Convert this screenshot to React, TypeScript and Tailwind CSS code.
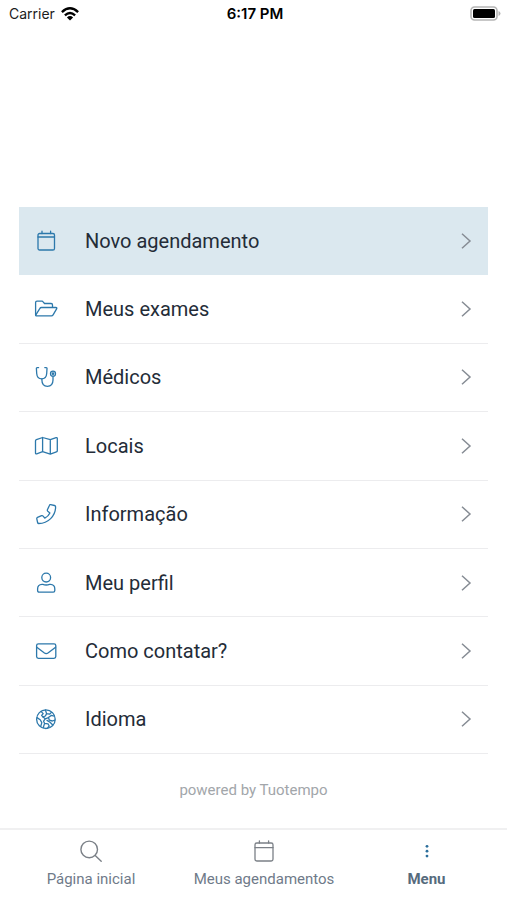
import type { ReactNode } from 'react';

const icons: Record<string, ReactNode> = {
    calendar: (
        <>
            <rect x="4" y="4.5" width="16.5" height="16.5" rx="1.6" />
            <path d="M4 8h16.5M8 2.2v2.3M16.6 2.2v2.3" />
        </>
    ),
    folder: (
        <>
            <path d="M1.6 18V5.6q0-1.4 1.4-1.4h5q.7 0 1.1.6l1.4 1.7h6.6q1.4 0 1.4 1.4v2.5" />
            <path d="M1.7 18.2 5.9 11.4q.5-.9 1.5-.9h14.4q1.6 0 .8 1.3l-3.5 6q-.6 1-1.7 1H2.6q-1 0-.9-.6z" />
        </>
    ),
    stethoscope: (
        <>
            <path d="M4.6 2.6H3.2q-.9 0-.8.9l.3 5q.4 5.3 5 5.3t5-5.3l.3-5q.1-.9-.8-.9h-1.4" />
            <path d="M7.9 13.9v1.2q0 6.2 5.5 6.2t5.6-6.2v-3.8" />
            <circle cx="19" cy="8.7" r="2.5" />
            <circle cx="19" cy="8.7" r=".7" />
        </>
    ),
    map: (
        <path d="M8.6 3.5 2.4 5.6q-.9.3-.9 1.2v12.1q0 1.3 1.2.9l5.9-2.1 7.7 2.4 6.1-2.2q.9-.3.9-1.2V4.6q0-1.3-1.2-.9l-5.8 2zM8.6 3.5v14.2M16.3 5.7v14.4" />
    ),
    phone: (
        <path d="m16.6 2.7 3.9.8q1.1.3 1.1 1.3C21.6 14 14 21.5 4.8 21.5q-1 0-1.2-1l-.8-3.7q-.2-1 .7-1.4l4.1-1.7q.9-.3 1.5.4l1.7 2.1q3.4-1.7 5.1-5.2l-2.1-1.7q-.7-.6-.4-1.5l2-4.4q.3-.9 1.2-.7z" />
    ),
    user: (
        <>
            <circle cx="12.2" cy="6.6" r="4.4" />
            <path d="M8 13.3h.8q3.4 1.4 6.8 0h.8q4.4.1 4.4 4.7v1.5q0 1.6-1.6 1.6h-14q-1.6 0-1.6-1.6V18q0-4.6 4.4-4.7z" />
        </>
    ),
    mail: (
        <>
            <rect x="2.6" y="4.8" width="19.2" height="14.6" rx="1.8" />
            <path d="m2.8 8.2 7.3 5.6q2.1 1.5 4.2 0l7.3-5.6" />
        </>
    ),
    globe: (
        <>
            <circle cx="11.9" cy="12.2" r="9.3" />
            <path d="M7 4.4 9.2 6.6 7.6 8.4 8.8 9.8 11.4 9l1.2-2.4L11.4 3M12.6 6.6l3 .6 1.8-1.8M3 10.6l3.2 2.2 1.6 2.8-1 3.6" />
            <path d="m8.8 9.8 2.4 2 3.2-1.2 2.8-2.2 3 .8M11.2 11.8l-1.6 2.4 1 2.2 3.4.4 1.2 2.2-1.6 2.2M14.4 10.6l1 2.6 3 .8 2.4-.8M13 13.4l3 1.8 2.8 2.8M10.6 16.4l-1.4 4.4" />
        </>
    ),
};

function Icon({ name, className }: { name: string; className?: string }) {
    return (
        <svg
            viewBox="0 0 24 24"
            className={`size-6 shrink-0 ${className ?? ''}`}
            fill="none"
            stroke="currentColor"
            strokeWidth="1.3"
            strokeLinecap="round"
            strokeLinejoin="round"
            aria-hidden="true"
        >
            {icons[name]}
        </svg>
    );
}

const menuItems = [
    { icon: 'calendar', label: 'Novo agendamento', active: true },
    { icon: 'folder', label: 'Meus exames' },
    { icon: 'stethoscope', label: 'Médicos' },
    { icon: 'map', label: 'Locais' },
    { icon: 'phone', label: 'Informação' },
    { icon: 'user', label: 'Meu perfil' },
    { icon: 'mail', label: 'Como contatar?' },
    { icon: 'globe', label: 'Idioma' },
];

function StatusBar() {
    return (
        <header className="grid h-7 grid-cols-3 items-center pr-[6px] pl-[9px] font-['Inter',sans-serif] text-sm text-[#1c1c1c]">
            <div className="flex items-center gap-[6px]">
                <span>Carrier</span>
                <svg viewBox="0 0 18 14" className="h-[14px] w-[18px]" fill="none" stroke="#000" strokeWidth="2.4" aria-hidden="true">
                    <path d="M.9 5.1Q9-2.4 17.1 5.1M3.9 8.3q5.1-4.6 10.2 0" />
                    <path d="M5.9 10.4q3.1-2.6 6.2 0L9 13.6z" fill="#000" stroke="none" />
                </svg>
            </div>
            <span className="text-center text-[15px] font-semibold text-black">6:17 PM</span>
            <svg viewBox="0 0 31 16" className="h-4 w-[31px] justify-self-end" aria-hidden="true">
                <rect x="1" y="1" width="26" height="13" rx="3.5" fill="#fff" stroke="#b5b5b5" strokeWidth="1.6" />
                <rect x="3" y="3" width="22" height="9" rx="1.5" fill="#000" />
                <path d="M28.5 5q2 .8 2 2.5t-2 2.5z" fill="#b5b5b5" />
            </svg>
        </header>
    );
}

export default function App() {
    return (
        <div className="flex min-h-screen flex-col bg-white font-['Roboto',sans-serif]">
            <StatusBar />

            <main className="flex flex-1 flex-col px-[19px] pt-[179px]">
                <ul className="grid flex-1 auto-rows-fr">
                    {menuItems.map((item) => (
                        <li key={item.label} className={item.active ? 'bg-[#dbe8ef]' : 'border-b border-[#ececee]'}>
                            <button type="button" className="flex h-full w-full items-center gap-[27px] py-4 pr-4 pl-[15px] text-left">
                                <Icon name={item.icon} className="text-[#2c78ab]" />
                                <span className="flex-1 text-xl text-[#242c38]">{item.label}</span>
                                <svg viewBox="0 0 12 18" className="h-[18px] w-3" fill="none" stroke="#868c94" strokeWidth="1.5" aria-hidden="true">
                                    <path d="m2 1.8 8 7.2-8 7.2" />
                                </svg>
                            </button>
                        </li>
                    ))}
                </ul>
                <p className="pt-[25px] pb-[27px] text-center text-[15px] leading-[22px] text-[#a2a6aa]">powered by Tuotempo</p>
            </main>

            {/* Bottom tabs */}
            <nav className="grid h-[72px] grid-cols-[182fr_164fr_161fr] border-t-2 border-[#f0f0f1] text-[15px] leading-5 text-[#6f7a89]">
                <button type="button" className="flex flex-col items-center gap-[6px] pt-[9px]">
                    <svg viewBox="0 0 24 24" className="size-6" fill="none" stroke="#7b8087" strokeWidth="1.4" strokeLinecap="round" aria-hidden="true">
                        <circle cx="10.2" cy="10.4" r="8.3" />
                        <path d="m16.2 16.4 6 5.8" />
                    </svg>
                    Página inicial
                </button>
                <button type="button" className="flex flex-col items-center gap-[6px] pt-[9px]">
                    <svg viewBox="0 0 24 24" className="size-6" fill="none" stroke="#7b8087" strokeWidth="1.3" strokeLinecap="round" aria-hidden="true">
                        <rect x="3" y="4" width="18" height="18" rx="1.8" />
                        <path d="M3 8.6h18M7.4 1.8V4M16.6 1.8V4" />
                    </svg>
                    Meus agendamentos
                </button>
                <button type="button" aria-current="page" className="flex flex-col items-center gap-[6px] pt-[9px] font-bold text-[#566b7d]">
                    <svg viewBox="0 0 24 24" className="size-6" fill="#2c6f9c" aria-hidden="true">
                        <circle cx="12" cy="7.3" r="1.4" />
                        <circle cx="12" cy="12.2" r="1.4" />
                        <circle cx="12" cy="17.1" r="1.4" />
                    </svg>
                    Menu
                </button>
            </nav>
        </div>
    );
}
